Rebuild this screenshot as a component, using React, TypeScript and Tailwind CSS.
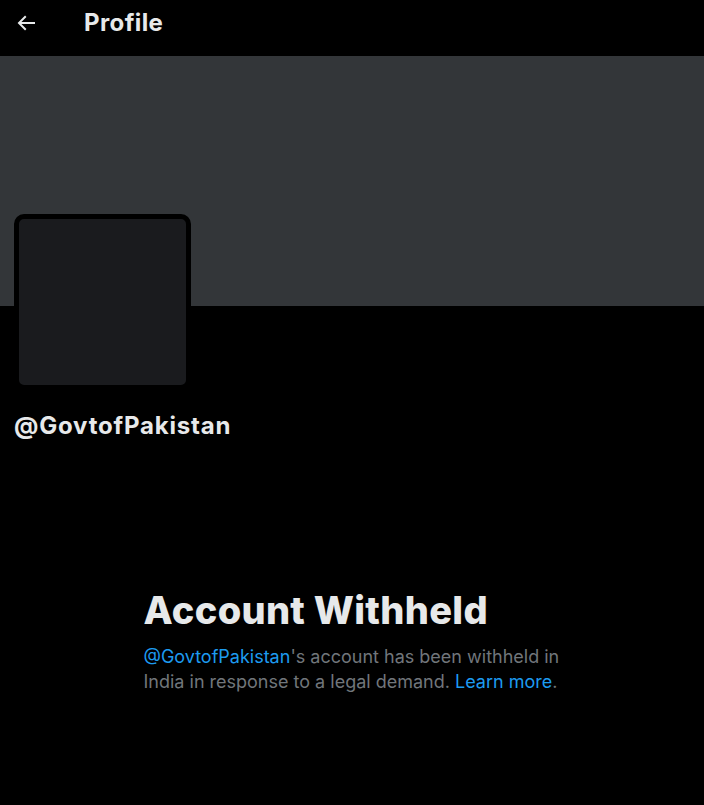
export default function App() {
  return (
    <div className="min-h-[805px] w-full bg-black text-[#e7e9ea] font-['Inter','Liberation_Sans',sans-serif]">
      {/* top bar */}
      <div className="h-[56px]">
        <div className="flex h-[46px] items-center pl-[14px]">
          <div className="flex w-[70px] items-center">
            <svg viewBox="0 0 24 24" className="h-6 w-6 fill-[#e7e9ea]">
              <path d="M7.414 13l5.043 5.04-1.414 1.42L3.586 12l7.457-7.46 1.414 1.42L7.414 11H21v2H7.414z" />
            </svg>
          </div>
          <h2 className="text-[24px] font-bold leading-7 tracking-[0.4px]">Profile</h2>
        </div>
      </div>

      {/* banner */}
      <div className="h-[250px] bg-[#333639]" />

      {/* avatar + handle */}
      <div className="px-[14px]">
        <div className="-mt-[92px] h-[176px] w-[177px] rounded-[10px] border-[5px] border-black bg-[#1a1b1e]" />
        <div className="mt-[22px] text-[24px] font-bold leading-7 tracking-[0.8px]">@GovtofPakistan</div>
      </div>

      {/* withheld notice */}
      <div className="mt-[148px] flex justify-center">
        <div className="ml-[-1px] w-[416px]">
          <h1 className="text-[38px] font-extrabold leading-[44px] tracking-[0.3px]">Account Withheld</h1>
          <p className="mt-[12px] text-[18px] leading-[25px] text-[#71767b]">
            <span className="text-[#1d9bf0]">@GovtofPakistan</span>'s account has been withheld in India in response to a legal demand.{" "}
            <span className="text-[#1d9bf0]">Learn more</span>.
          </p>
        </div>
      </div>
    </div>
  );
}
